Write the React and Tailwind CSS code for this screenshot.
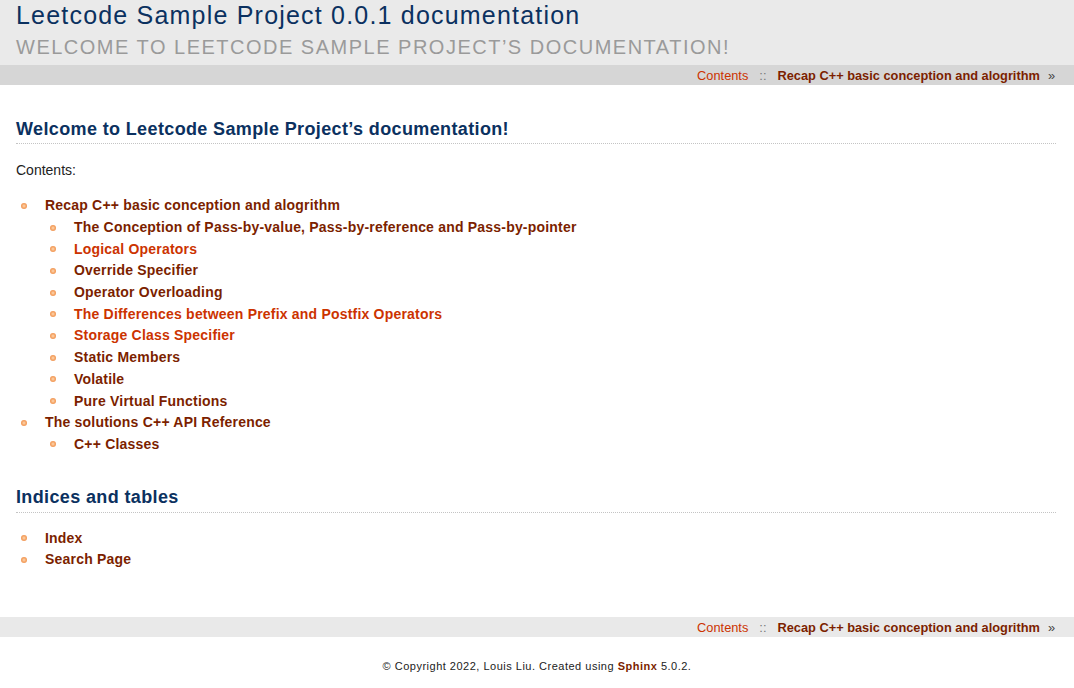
import React from "react";

const DARK = "text-[#7c1f00]";
const RED = "text-[#cc3300]";

function Bullet() {
  return (
    <span className="ml-[5px] mr-[18px] inline-block h-[6px] w-[6px] shrink-0 rounded-full bg-[radial-gradient(circle_at_50%_50%,#fdd9b5_0%,#f6a86a_45%,#e9803a_100%)]" />
  );
}

function Item({ text, red, children }) {
  return (
    <li>
      <div className="flex items-center h-[21.7px]">
        <Bullet />
        <a className={`font-bold tracking-[0.2px] ${red ? RED : DARK}`}>{text}</a>
      </div>
      {children}
    </li>
  );
}

function NavBar({ bg }) {
  return (
    <div className={`h-[20px] ${bg} flex items-center justify-end pr-[19px] pt-px text-[12.8px] leading-[19px]`}>
      <a className={RED}>Contents</a>
      <span className="px-[11px] text-[#777]">::</span>
      <a className={`font-bold ${DARK}`}>Recap C++ basic conception and alogrithm</a>
      <span className="pl-[8px] text-[#444]">»</span>
    </div>
  );
}

export default function App() {
  const sub = [
    ["The Conception of Pass-by-value, Pass-by-reference and Pass-by-pointer", false],
    ["Logical Operators", true],
    ["Override Specifier", false],
    ["Operator Overloading", false],
    ["The Differences between Prefix and Postfix Operators", true],
    ["Storage Class Specifier", true],
    ["Static Members", false],
    ["Volatile", false],
    ["Pure Virtual Functions", false],
  ];
  return (
    <div className="w-[1074px] min-h-[688px] bg-white text-[#222] font-['Liberation_Sans',Arial,sans-serif]">
      <div className="h-[65px] bg-[#eaeaea] px-4">
        <div className="text-[25px] leading-[30px] tracking-[1.2px] text-[#0b3160]">Leetcode Sample Project 0.0.1 documentation</div>
        <div className="mt-[5px] text-[20px] leading-[24px] tracking-[1.5px] uppercase text-[#9a9a9a]">
          Welcome to Leetcode Sample Project’s documentation!
        </div>
      </div>
      <NavBar bg="bg-[#d6d6d6]" />

      <div className="px-4">
        <h1 className="mt-[32px] pb-[2px] border-b border-dotted border-[#c4c4c4] text-[18px] leading-[24px] tracking-[0.37px] font-bold text-[#0b3160] mr-[2px]">
          Welcome to Leetcode Sample Project’s documentation!
        </h1>
        <p className="mt-4 text-[14px] leading-[20px]">Contents:</p>
        <ul className="mt-[15px] text-[14px]">
          <Item text="Recap C++ basic conception and alogrithm">
            <ul className="ml-[29px]">
              {sub.map(([t, r]) => (
                <Item key={t} text={t} red={r} />
              ))}
            </ul>
          </Item>
          <Item text="The solutions C++ API Reference">
            <ul className="ml-[29px]">
              <Item text="C++ Classes" />
            </ul>
          </Item>
        </ul>

        <h2 className="mt-[30px] pb-[3px] border-b border-dotted border-[#c4c4c4] text-[18px] leading-[24px] tracking-[0.37px] font-bold text-[#0b3160] mr-[2px]">
          Indices and tables
        </h2>
        <ul className="mt-[14px] text-[14px]">
          <Item text="Index" />
          <Item text="Search Page" />
        </ul>
      </div>

      <div className="mt-[46px]">
        <NavBar bg="bg-[#e9e9e9]" />
      </div>
      <div className="mt-[22px] text-center text-[11px] leading-[14px] tracking-[0.5px] text-[#222]">
        © Copyright 2022, Louis Liu. Created using <a className={`font-bold ${DARK}`}>Sphinx</a> 5.0.2.
      </div>
    </div>
  );
}
